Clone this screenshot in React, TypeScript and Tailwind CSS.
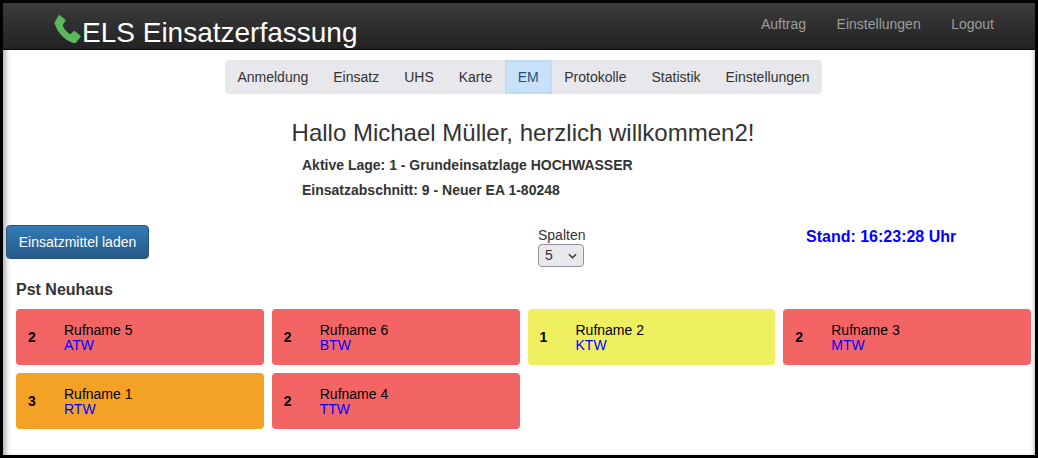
const menu = ["Anmeldung", "Einsatz", "UHS", "Karte", "EM", "Protokolle", "Statistik", "Einstellungen"];

const cards = [
  { nr: 2, name: "Rufname 5", typ: "ATW", color: "bg-[#f36565]" },
  { nr: 2, name: "Rufname 6", typ: "BTW", color: "bg-[#f36565]" },
  { nr: 1, name: "Rufname 2", typ: "KTW", color: "bg-[#eef060]" },
  { nr: 2, name: "Rufname 3", typ: "MTW", color: "bg-[#f36565]" },
  { nr: 3, name: "Rufname 1", typ: "RTW", color: "bg-[#f3a226]" },
  { nr: 2, name: "Rufname 4", typ: "TTW", color: "bg-[#f36565]" },
];

function PhoneIcon() {
  return (
    <svg viewBox="0 0 27 28" className="w-[27px] h-[28px] fill-[#5cb85c]">
      <path d="M6 .3 11 4.600c.5.500.6 1 .2 1.600L9 9.800c-.3.500-.3 1 0 1.500 1.500 3 3.500 5.500 6.500 7.500.5.300 1 .300 1.400-.1l2.600-2.400c.5-.4 1-.4 1.500 0l5.500 4.500c.4.400.4.900.1 1.300l-4.900 5.900c-.3.400-.8.500-1.300.4C11.500 26 3.500 18 .6 8.500c-.2-.7-.1-1.200.3-1.700L4.600.5C5 0 5.500 0 6 .3z" />
    </svg>
  );
}

export default function App() {
  return (
    <div className="w-[1038px] h-[458px] bg-white border-t-[3px] border-l-[3px] border-r-[3px] border-b-[3px] border-black font-['Liberation_Sans',sans-serif] text-[14px] text-[#333] overflow-hidden shadow-[inset_6px_0_5px_-3px_rgba(0,0,0,0.3),inset_-4px_0_4px_-3px_rgba(0,0,0,0.25)]">
      <nav className="flex items-center justify-between h-[47px] bg-gradient-to-b from-[#3c3c3c] to-[#222] pl-[51px] pr-[41px] border-b border-[#080808]">
        <div className="flex items-start self-start pt-[12px]">
          <PhoneIcon />
          <span className="text-[28px] leading-[30px] text-white mt-[3px] ml-[1px]">ELS Einsatzerfassung</span>
        </div>
        <ul className="flex gap-[30.5px] text-[#9d9d9d] -translate-y-[2px]">
          <li>Auftrag</li>
          <li>Einstellungen</li>
          <li>Logout</li>
        </ul>
      </nav>

      <div className="flex justify-center mt-[10px] pl-[9px]">
        <ul className="flex h-[34px] rounded-[4px] bg-[#e7e7ec] overflow-hidden">
          {menu.map((item) => (
            <li
              key={item}
              className={
                item === "EM"
                  ? "flex items-center px-[11px] bg-[#c8e1f8] text-[#23527c] border-2 border-[#bedcf6]"
                  : "flex items-center px-[12.5px]"
              }
            >
              {item}
            </li>
          ))}
        </ul>
      </div>

      <h1 className="text-[24px] leading-[26px] text-center mt-[26px] pl-[8px]">Hallo Michael Müller, herzlich willkommen2!</h1>
      <div className="pl-[299px] mt-[7px] font-bold leading-[25px]">
        <p>Aktive Lage: 1 - Grundeinsatzlage HOCHWASSER</p>
        <p>Einsatzabschnitt: 9 - Neuer EA 1-80248</p>
      </div>

      <div className="flex items-start h-[45px] mt-[22px] pl-[3px]">
        <button className="w-[143px] h-[34px] rounded-[4px] border border-[#245580] bg-gradient-to-b from-[#337ab7] to-[#265a88] text-white text-[14px]">
          Einsatzmittel laden
        </button>
        <div className="ml-[389px] w-[268px] mt-[2px]">
          <div className="leading-[16px]">Spalten</div>
          <div className="flex items-center justify-between w-[46px] h-[23px] mt-[1px] px-[6px] rounded-[4px] border border-[#8f8f9d] bg-[#e9e9ed] text-[14px]">
            <span>5</span>
            <svg viewBox="0 0 10 6" className="w-[9px] h-[6px] fill-none stroke-[#333] stroke-[1.5]">
              <path d="M1 1l4 4 4-4" />
            </svg>
          </div>
        </div>
        <div className="font-bold text-[16px] leading-[18px] text-[#0000ff] mt-[3px]">Stand: 16:23:28 Uhr</div>
      </div>

      <h2 className="font-bold text-[16px] leading-[18px] pl-[13px] mt-[11px]">Pst Neuhaus</h2>

      <div className="grid grid-cols-4 gap-[8px] pl-[13px] pr-[4px] mt-[10px]">
        {cards.map((c) => (
          <div key={c.name} className={`flex items-center h-[56px] rounded-[4px] ${c.color} text-black`}>
            <div className="w-[48px] pl-[12px] font-bold">{c.nr}</div>
            <div className="leading-[15px] pt-[2px]">
              <div>{c.name}</div>
              <div className="text-[#0000ff]">{c.typ}</div>
            </div>
          </div>
        ))}
      </div>
    </div>
  );
}
